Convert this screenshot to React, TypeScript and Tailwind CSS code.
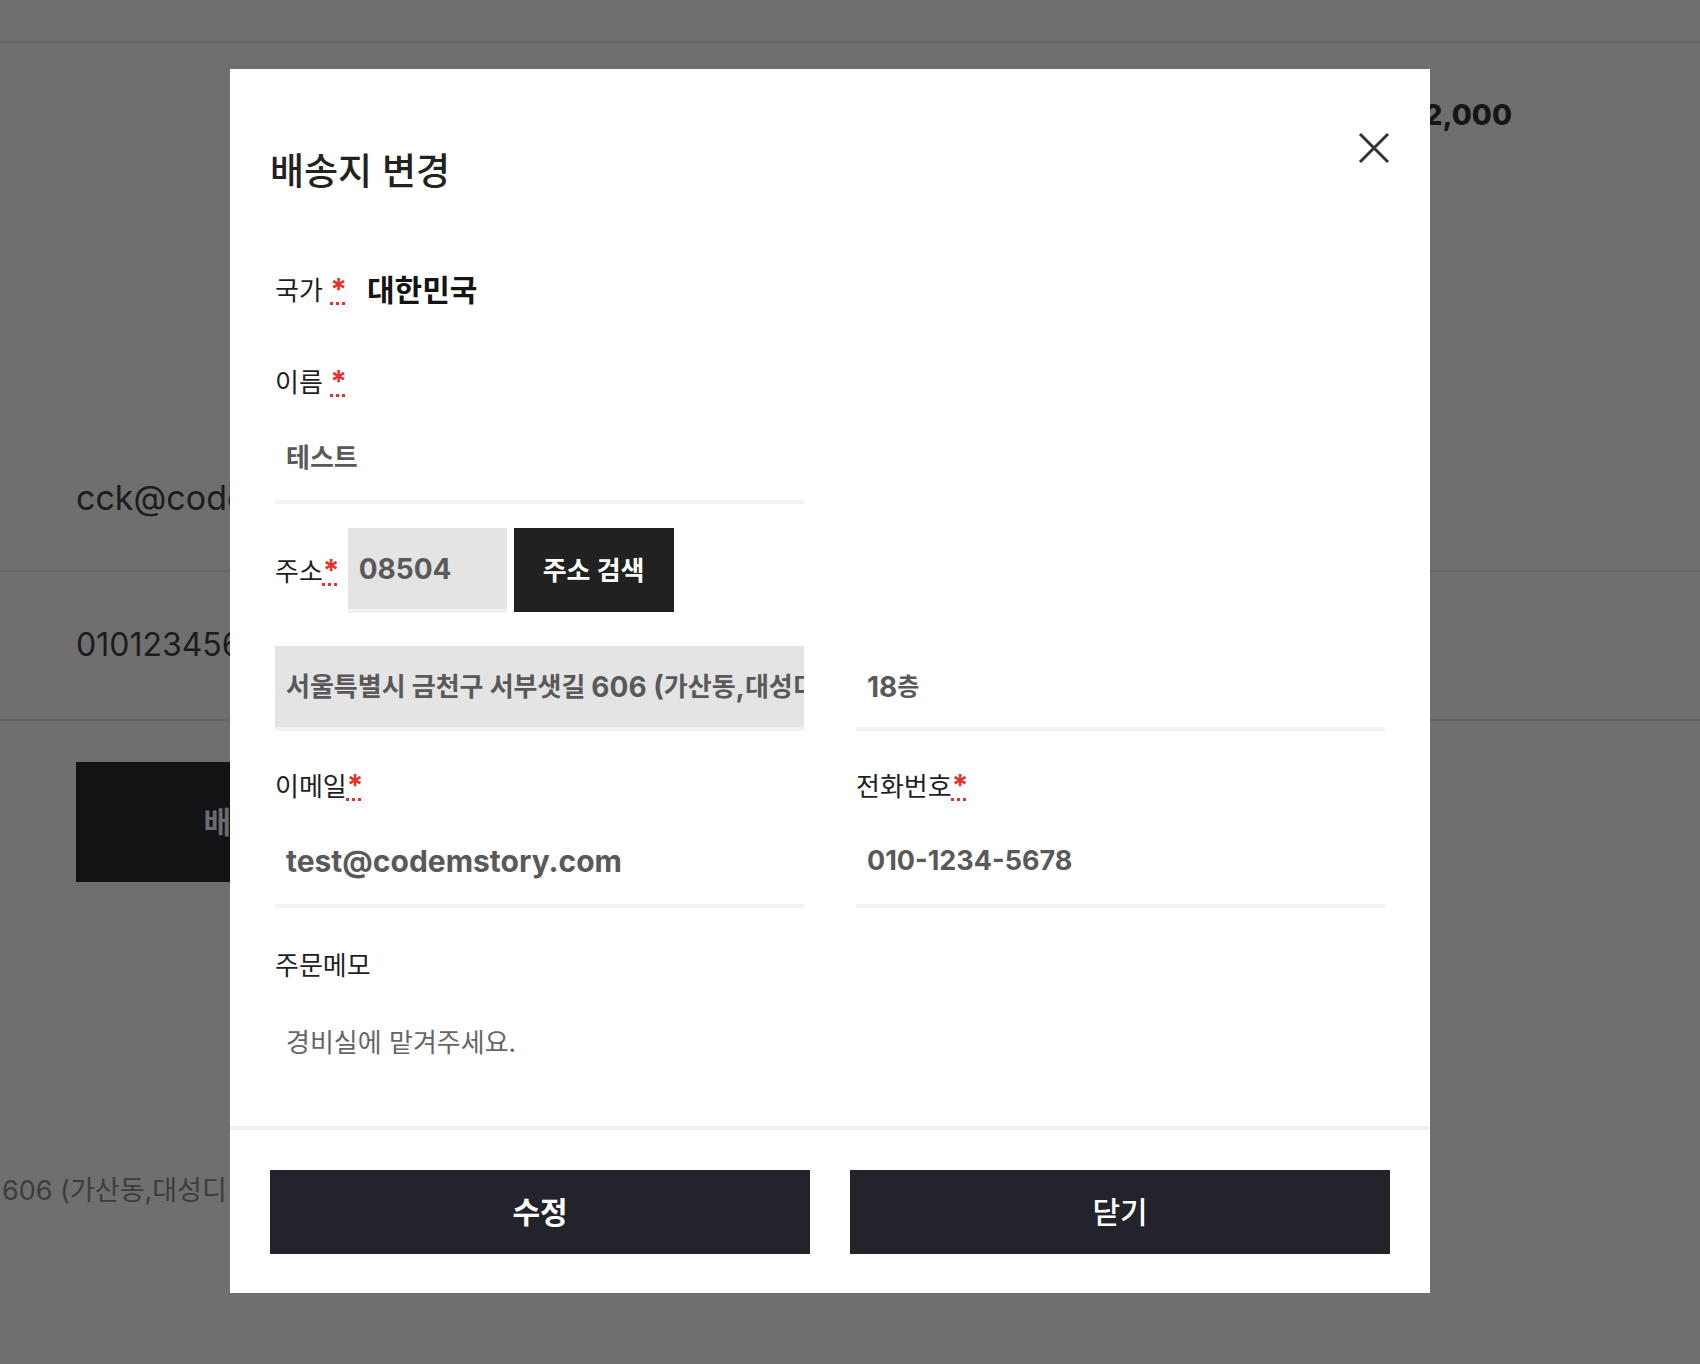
import React from 'react';

function Req({ space = false }: { space?: boolean }) {
    return (
        <>
            {space && ' '}
            <abbr title="required" className="text-[30px] font-bold text-[#e5322d]">
                *
            </abbr>
        </>
    );
}

function Label({ children }: { children: React.ReactNode }) {
    return <div className="h-[40px] text-[26px] leading-[40px] text-[#1f1f1f]">{children}</div>;
}

export default function App() {
    return (
        <div className="relative h-[1364px] overflow-hidden bg-[#6f6f6f] font-[Inter,'Noto_Sans_CJK_KR',sans-serif]">
            {/* page behind the overlay */}
            <div className="h-[43px] border-b-2 border-[#626262]" />
            <div className="flex justify-end pr-[188px] pt-[52px]">
                <span className="text-[29px] font-extrabold leading-[40px] text-[#161616]">12,000</span>
            </div>
            <div className="pl-[76px] pt-[343px] text-[34px] leading-[40px] text-[#1c1c1c]">cck@codemstory.com</div>
            <div className="mt-[52px] border-t-2 border-[#646464]" />
            <div className="pl-[76px] pt-[53px] text-[32px] leading-[40px] text-[#1c1c1c]">0101234567</div>
            <div className="mt-[54px] border-t-2 border-[#646464]" />
            <div className="pl-[76px] pt-[41px]">
                <div className="flex h-[120px] w-[400px] items-center justify-center bg-[#131315] text-[30px] font-bold text-[#6c6c6c]">
                    배송지 변경
                </div>
            </div>
            <div className="w-[228px] overflow-hidden whitespace-nowrap pl-[2px] pt-[289px] text-[27px] leading-[40px] text-[#3d3d3d]">
                606 (가산동,대성디폴리스 지식산업센터) 18층
            </div>

            {/* modal */}
            <div className="absolute left-[230px] top-[69px] w-[1200px] bg-white">
                <button className="absolute right-[40px] top-[63px] h-[32px] w-[32px]" aria-label="close">
                    <svg viewBox="0 0 32 32" className="h-[32px] w-[32px]" fill="none" stroke="#333" strokeWidth="3">
                        <path d="M2 2 L30 30 M30 2 L2 30" />
                    </svg>
                </button>

                <div className="px-[40px] pt-[78px]">
                    <h2 className="text-[37px] font-medium leading-[50px] text-[#222]">배송지 변경</h2>
                </div>

                <div className="px-[45px] pb-[27px]">
                    {/* country */}
                    <div className="mt-[73px] flex h-[40px] items-center">
                        <span className="text-[26px] leading-[40px] text-[#1f1f1f]">
                            국가
                            <Req space />
                        </span>
                        <span className="ml-[20px] text-[30px] font-bold leading-[40px] text-[#141414]">대한민국</span>
                    </div>

                    {/* name */}
                    <div className="mt-[51px]">
                        <Label>
                            이름
                            <Req space />
                        </Label>
                    </div>
                    <div className="mt-[13px] grid grid-cols-2 gap-x-[52px]">
                        <div className="flex h-[90px] items-center border-b-4 border-[#f1f2f3] pl-[11px] text-[26px] font-bold text-[#595959]">
                            테스트
                        </div>
                    </div>

                    {/* address */}
                    <div className="mt-[24px] flex items-center">
                        <span className="text-[26px] leading-[40px] text-[#1f1f1f]">
                            주소
                            <Req />
                        </span>
                        <div className="ml-[8px] flex h-[85px] w-[159px] items-center border-b-4 border-[#f2f2f2] bg-[#e4e4e4] pl-[11px] text-[28px] font-bold text-[#5a5a5a]">
                            08504
                        </div>
                        <button className="ml-[7px] h-[84px] w-[160px] self-start bg-[#212121] text-[26px] font-bold text-white">
                            주소 검색
                        </button>
                    </div>
                    <div className="mt-[33px] grid grid-cols-2 gap-x-[52px]">
                        <div className="flex h-[85px] items-center overflow-hidden whitespace-nowrap border-b-4 border-[#f2f2f2] bg-[#e4e4e4] pl-[11px] text-[26px] font-bold leading-[40px] text-[#595959]">
                            서울특별시 금천구 서부샛길 <span className="ml-[6px] text-[28px]">606 (</span>가산동<span className="text-[28px]">,</span>대성디폴리스 지식산업센터)
                        </div>
                        <div className="flex h-[85px] items-center border-b-4 border-[#f2f2f2] pl-[11px] text-[24px] font-bold leading-[40px] text-[#595959]">
                            <span className="text-[28px]">18</span>층
                        </div>
                    </div>

                    {/* email / phone */}
                    <div className="mt-[34px] grid grid-cols-2 gap-x-[52px]">
                        <Label>
                            이메일
                            <Req />
                        </Label>
                        <Label>
                            전화번호
                            <Req />
                        </Label>
                    </div>
                    <div className="mt-[13px] grid grid-cols-2 gap-x-[52px]">
                        <div className="flex h-[90px] items-center border-b-4 border-[#f1f2f3] pl-[11px] text-[30px] font-bold text-[#595959]">
                            test@codemstory.com
                        </div>
                        <div className="flex h-[90px] items-center border-b-4 border-[#f1f2f3] pl-[11px] text-[27px] font-bold text-[#595959]">
                            010-1234-5678
                        </div>
                    </div>

                    {/* memo */}
                    <div className="mt-[38px]">
                        <Label>주문메모</Label>
                    </div>
                    <div className="mt-[13px] h-[100px] pl-[11px] pt-[24px] text-[26px] leading-[40px] text-[#666]">
                        경비실에 맡겨주세요.
                    </div>
                </div>

                <div className="grid grid-cols-2 gap-[40px] border-t-4 border-[#eeeeee] px-[40px] pb-[39px] pt-[40px]">
                    <button className="h-[84px] bg-[#23232b] text-[30px] font-bold text-white">수정</button>
                    <button className="h-[84px] bg-[#23232b] text-[30px] font-medium text-white">닫기</button>
                </div>
            </div>
        </div>
    );
}
